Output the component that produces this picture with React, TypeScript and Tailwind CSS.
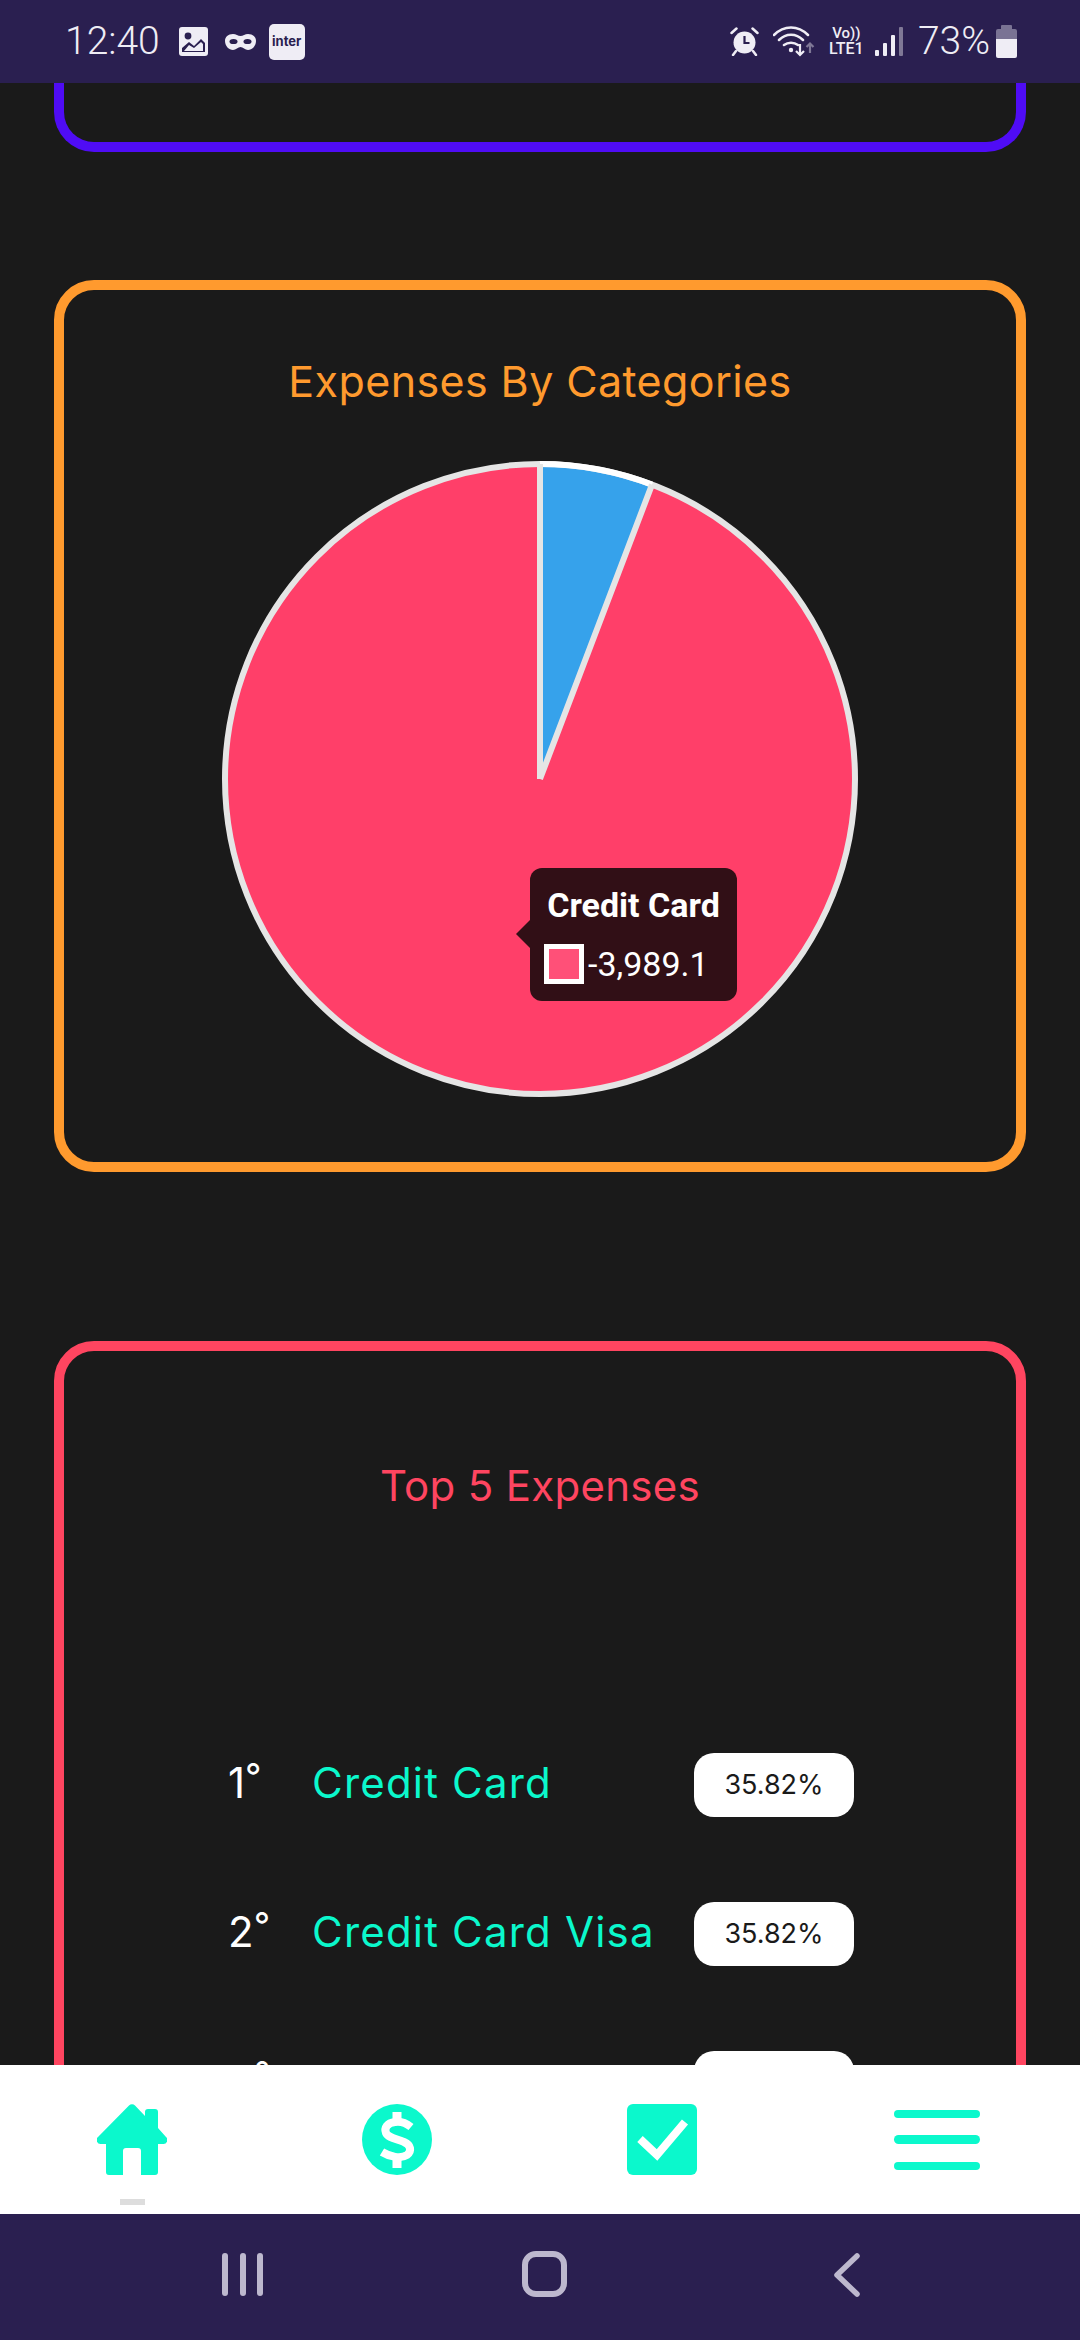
const teal = '#0bf8cc'

const expenses = [
  { rank: '1', name: 'Credit Card', percent: '35.82%' },
  { rank: '2', name: 'Credit Card Visa', percent: '35.82%' },
  { rank: '3', name: 'Food', percent: '12.40%' },
]

function StatusBar() {
  return (
    <div className="flex h-[83px] shrink-0 items-center justify-between bg-[#2a1f50] pl-[65px] pr-[63px] text-[#efedf5]">
      <div className="flex items-center">
        <span className="font-['Roboto',sans-serif] text-[39px] font-light leading-none">12:40</span>
        <svg className="ml-[19px]" width="29" height="29" viewBox="0 0 29 29">
          <rect width="29" height="29" rx="3" fill="#efedf5" />
          <circle cx="9" cy="9" r="3.4" fill="#2a1f50" />
          <path d="M3 25v-4l7-6 5 4 7-7 4 4v9z" fill="#2a1f50" />
          <path d="M5 24l5-6 5 3 7-6 2 2v7z" fill="#efedf5" />
        </svg>
        <svg className="ml-[17px]" width="31" height="18" viewBox="0 0 31 18">
          <path d="M8 1c3 0 5 2 7.500 2S20 1 23 1c5 0 8 3 8 7 0 5-4 9-8 9-3 0-5-3-7.500-3S11 17 8 17c-4 0-8-4-8-9 0-4 3-7 8-7z" fill="#efedf5" />
          <ellipse cx="8.500" cy="8.500" rx="4" ry="2.600" fill="#2a1f50" />
          <ellipse cx="22.500" cy="8.500" rx="4" ry="2.600" fill="#2a1f50" />
        </svg>
        <span className="ml-[13px] flex h-[36px] w-[36px] items-center justify-center rounded-[5px] bg-[#efedf5] font-['Inter',sans-serif] text-[13px] font-bold text-[#2a1f50]">inter</span>
      </div>
      <div className="flex items-center">
        <svg width="29" height="29" viewBox="0 0 29 29" fill="none">
          <circle cx="14.500" cy="15.500" r="11" fill="#efedf5" />
          <path d="M14.500 9v7h5" stroke="#2a1f50" strokeWidth="2.200" />
          <path d="M1.500 6l5-4.500M27.500 6l-5-4.500M6 24l-3 4M23 24l3 4" stroke="#efedf5" strokeWidth="2.500" strokeLinecap="round" />
        </svg>
        <svg className="ml-[14px]" width="42" height="31" viewBox="0 0 42 31" fill="none">
          <path d="M1 9c10-10 24-10 34 0M6 14c7-7 17-7 24 0M11 19c4-3 10-3 14 0" stroke="#efedf5" strokeWidth="2.500" strokeLinecap="round" />
          <circle cx="18" cy="24" r="2.200" fill="#efedf5" />
          <path d="M27 18v11M23 25l4 4 4-4" stroke="#efedf5" strokeWidth="2.200" />
          <path d="M37 27v-9M33.500 21l3.500-3.500 3.500 3.500" stroke="#7f7896" strokeWidth="2.200" />
        </svg>
        <div className="ml-[12px] flex w-[39px] flex-col items-center font-['Roboto',sans-serif] font-medium leading-none">
          <span className="text-[15px]">Vo))</span>
          <span className="text-[16px]">LTE1</span>
        </div>
        <svg className="ml-[9px]" width="28" height="29" viewBox="0 0 28 29">
          <rect x="0" y="23" width="4" height="6" rx="1" fill="#efedf5" />
          <rect x="8" y="16" width="4" height="13" rx="1" fill="#efedf5" />
          <rect x="16" y="8" width="4" height="21" rx="1" fill="#efedf5" />
          <rect x="24" y="0" width="4" height="29" rx="1" fill="#7f7896" />
        </svg>
        <span className="ml-[15px] font-['Roboto',sans-serif] text-[39px] font-light leading-none">73%</span>
        <svg className="ml-[6px]" width="21" height="33" viewBox="0 0 21 33">
          <path d="M6 0h9a1 1 0 0 1 1 1v3h3a2 2 0 0 1 2 2v8H0V6a2 2 0 0 1 2-2h3V1a1 1 0 0 1 1-1z" fill="#7a7394" />
          <path d="M0 14h21v17a2 2 0 0 1-2 2H2a2 2 0 0 1-2-2z" fill="#efedf5" />
        </svg>
      </div>
    </div>
  )
}

function PieChart() {
  return (
    <div className="relative mx-auto mt-[52px] h-[642px] w-[642px]">
      <svg width="642" height="642" viewBox="0 0 642 642">
        <circle cx="321" cy="321" r="315" fill="#ff3f69" />
        <path d="M321 321V6A315 315 0 0 1 433 26.600z" fill="#36a2eb" />
        <circle cx="321" cy="321" r="315" fill="none" stroke="#e5e5e5" strokeWidth="6" />
        <path d="M321 6A315 315 0 0 1 433 26.600" fill="none" stroke="#ffffff" strokeWidth="6" />
        <path d="M321 321V6M321 321L433 26.600" stroke="#e5e5e5" strokeWidth="6" />
      </svg>
      {/* tooltip */}
      <div className="absolute left-[311px] top-[410px] h-[133px] w-[207px] rounded-[12px] bg-[#310f16] text-white">
        <div className="absolute left-[-14px] top-[52px] h-0 w-0 border-y-[14px] border-r-[14px] border-y-transparent border-r-[#310f16]" />
        <div className="pt-[20px] text-center font-['Roboto',sans-serif] text-[34px] font-bold leading-[34px]">Credit Card</div>
        <div className="mt-[22px] flex items-center pl-[14px]">
          <span className="h-[40px] w-[40px] border-[5px] border-white bg-[#ff5078]" />
          <span className="ml-[4px] font-['Roboto',sans-serif] text-[34px] leading-[40px]">-3,989.1</span>
        </div>
      </div>
    </div>
  )
}

function BottomNav() {
  return (
    <div className="relative flex h-[149px] shrink-0 items-start bg-white pt-[39px]">
      <div className="flex w-full items-center pl-[97px]">
        <span className="relative h-[71px] w-[70px]">
          <svg width="70" height="71" viewBox="0 0 70 71">
            <path
              d="M32 1.500a4 4 0 0 1 6 0L48 12V8a3 3 0 0 1 3-3h7a3 3 0 0 1 3 3v16l8 9a4 4 0 0 1-3 7h-5v28a3 3 0 0 1-3 3H44V47a3 3 0 0 0-3-3H29a3 3 0 0 0-3 3v24H12a3 3 0 0 1-3-3V40H4a4 4 0 0 1-3-7z"
              fill={teal}
            />
          </svg>
          <span className="absolute left-[23px] top-[95px] h-[6px] w-[25px] bg-[#dddddd]" />
        </span>
        <svg className="ml-[195px]" width="70" height="71" viewBox="0 0 70 71">
          <ellipse cx="35" cy="35.500" rx="35" ry="35.500" fill={teal} />
          <path d="M49 23C44 19 38 17 33 18 25 19 22 24 24 29 26 34 36 35 42 38 49 41 50 47 45 51 39 55 28 53 20 48" fill="none" stroke="#fff" strokeWidth="8" />
          <path d="M35 8v10M35 53v11" stroke="#fff" strokeWidth="9" />
        </svg>
        <svg className="ml-[195px]" width="70" height="71" viewBox="0 0 70 71">
          <rect width="70" height="71" rx="6" fill={teal} />
          <path d="M13 35l17 16 28-33" fill="none" stroke="#fff" strokeWidth="8" />
        </svg>
        <div className="ml-[197px] flex h-[60px] w-[86px] flex-col justify-between">
          <span className="h-[8px] rounded-full bg-[#0bf8cc]" />
          <span className="h-[9px] rounded-full bg-[#0bf8cc]" />
          <span className="h-[8px] rounded-full bg-[#0bf8cc]" />
        </div>
      </div>
    </div>
  )
}

function SystemNav() {
  return (
    <div className="flex h-[126px] shrink-0 items-start bg-[#2a1f50] pl-[222px] pt-[39px]">
      <div className="flex h-[43px] w-[41px] justify-between">
        <span className="w-[6px] rounded-full bg-[#bdb8ce]" />
        <span className="w-[6px] rounded-full bg-[#bdb8ce]" />
        <span className="w-[6px] rounded-full bg-[#bdb8ce]" />
      </div>
      <span className="ml-[259px] mt-[-2px] h-[46px] w-[45px] rounded-[14px] border-[6px] border-[#bdb8ce]" />
      <svg className="ml-[267px]" width="26" height="44" viewBox="0 0 26 44" fill="none">
        <path d="M23 3L3 22l20 19" stroke="#bdb8ce" strokeWidth="5.500" strokeLinecap="round" strokeLinejoin="round" />
      </svg>
    </div>
  )
}

export default function App() {
  return (
    <div className="flex h-[2340px] w-[1080px] flex-col overflow-hidden bg-[#1a1a1a] font-['Inter',sans-serif]">
      <StatusBar />

      <div className="min-h-0 flex-1 overflow-hidden px-[54px]">
        {/* bottom of the card scrolled off the top */}
        <div className="h-[69px] rounded-b-[40px] border-x-[10px] border-b-[10px] border-[#4f0cf5]" />

        <section className="mt-[128px] h-[892px] rounded-[40px] border-[10px] border-[#ff9a2e] pt-[66px]">
          <h2 className="text-center text-[43px] font-normal leading-[50px] tracking-[0.4px] text-[#ff9a2e]">Expenses By Categories</h2>
          <PieChart />
        </section>

        <section className="mt-[169px] h-[1000px] rounded-[40px] border-[10px] border-[#ff4560] pt-[110px]">
          <h2 className="text-center text-[42px] font-normal leading-[50px] tracking-[0.3px] text-[#ff4560]">Top 5 Expenses</h2>
          <div className="mt-[242px] flex flex-col gap-[85px] pl-[164px]">
            {expenses.map((item) => (
              <div key={item.rank} className="flex h-[64px] items-center">
                <span className="relative top-[-2px] w-[84px] text-[42px] leading-none text-white">
                  {item.rank}
                  <span className="relative top-[-9px] text-[36px] leading-none">°</span>
                </span>
                <span className="relative top-[-2px] w-[382px] text-[42px] leading-none tracking-[1.2px] text-[#0bf8cc]">{item.name}</span>
                <span className="flex h-[64px] w-[160px] items-center justify-center rounded-[20px] bg-white text-[27px] text-[#1a1a1a]">{item.percent}</span>
              </div>
            ))}
          </div>
        </section>
      </div>

      <BottomNav />
      <SystemNav />
    </div>
  )
}
